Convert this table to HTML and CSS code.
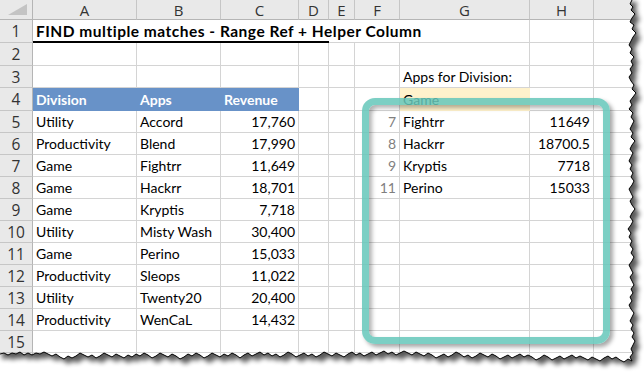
FILE: index.html
```html
<!DOCTYPE html>
<html>
<head>
<meta charset="utf-8">
<link rel="stylesheet" href="styles.css">
</head>
<body>
<div class="page">
  <div class="sheet">
    <!-- column headers -->
    <div class="hd corner"><span class="tri"></span></div>
    <div class="hd col">A</div><div class="hd col">B</div><div class="hd col">C</div><div class="hd col">D</div><div class="hd col">E</div><div class="hd col">F</div><div class="hd col">G</div><div class="hd col">H</div><div class="hd col"></div>

    <!-- row 1 -->
    <div class="hd rn">1</div>
    <div class="c title">FIND multiple matches - Range Ref + Helper Column</div>
    <div class="c nr"></div><div class="c nr"></div><div class="c"></div><div class="c"></div><div class="c"></div>

    <!-- row 2 -->
    <div class="hd rn">2</div>
    <div class="c"></div><div class="c"></div><div class="c"></div><div class="c"></div><div class="c"></div><div class="c"></div><div class="c"></div><div class="c"></div><div class="c"></div>

    <!-- row 3 -->
    <div class="hd rn">3</div>
    <div class="c"></div><div class="c"></div><div class="c"></div><div class="c"></div><div class="c"></div><div class="c"></div><div class="c">Apps for Division:</div><div class="c"></div><div class="c"></div>

    <!-- row 4 -->
    <div class="hd rn">4</div>
    <div class="c blue">Division</div><div class="c blue">Apps</div><div class="c blue">Revenue</div><div class="c"></div><div class="c"></div><div class="c"></div><div class="c cream">Game</div><div class="c"></div><div class="c"></div>

    <!-- row 5 -->
    <div class="hd rn">5</div>
    <div class="c">Utility</div><div class="c">Accord</div><div class="c num">17,760</div><div class="c"></div><div class="c"></div><div class="c num gray">7</div><div class="c">Fightrr</div><div class="c num">11649</div><div class="c"></div>

    <!-- row 6 -->
    <div class="hd rn">6</div>
    <div class="c">Productivity</div><div class="c">Blend</div><div class="c num">17,990</div><div class="c"></div><div class="c"></div><div class="c num gray">8</div><div class="c">Hackrr</div><div class="c num">18700.5</div><div class="c"></div>

    <!-- row 7 -->
    <div class="hd rn">7</div>
    <div class="c">Game</div><div class="c">Fightrr</div><div class="c num">11,649</div><div class="c"></div><div class="c"></div><div class="c num gray">9</div><div class="c">Kryptis</div><div class="c num">7718</div><div class="c"></div>

    <!-- row 8 -->
    <div class="hd rn">8</div>
    <div class="c">Game</div><div class="c">Hackrr</div><div class="c num">18,701</div><div class="c"></div><div class="c"></div><div class="c num gray">11</div><div class="c">Perino</div><div class="c num">15033</div><div class="c"></div>

    <!-- row 9 -->
    <div class="hd rn">9</div>
    <div class="c">Game</div><div class="c">Kryptis</div><div class="c num">7,718</div><div class="c"></div><div class="c"></div><div class="c"></div><div class="c"></div><div class="c"></div><div class="c"></div>

    <!-- row 10 -->
    <div class="hd rn">10</div>
    <div class="c">Utility</div><div class="c">Misty Wash</div><div class="c num">30,400</div><div class="c"></div><div class="c"></div><div class="c"></div><div class="c"></div><div class="c"></div><div class="c"></div>

    <!-- row 11 -->
    <div class="hd rn">11</div>
    <div class="c">Game</div><div class="c">Perino</div><div class="c num">15,033</div><div class="c"></div><div class="c"></div><div class="c"></div><div class="c"></div><div class="c"></div><div class="c"></div>

    <!-- row 12 -->
    <div class="hd rn">12</div>
    <div class="c">Productivity</div><div class="c">Sleops</div><div class="c num">11,022</div><div class="c"></div><div class="c"></div><div class="c"></div><div class="c"></div><div class="c"></div><div class="c"></div>

    <!-- row 13 -->
    <div class="hd rn">13</div>
    <div class="c">Utility</div><div class="c">Twenty20</div><div class="c num">20,400</div><div class="c"></div><div class="c"></div><div class="c"></div><div class="c"></div><div class="c"></div><div class="c"></div>

    <!-- row 14 -->
    <div class="hd rn">14</div>
    <div class="c">Productivity</div><div class="c">WenCaL</div><div class="c num">14,432</div><div class="c"></div><div class="c"></div><div class="c"></div><div class="c"></div><div class="c"></div><div class="c"></div>

    <!-- row 15 -->
    <div class="hd rn">15</div>
    <div class="c"></div><div class="c"></div><div class="c"></div><div class="c"></div><div class="c"></div><div class="c"></div><div class="c"></div><div class="c"></div><div class="c"></div>

    <!-- row 16 -->
    <div class="hd rn">16</div>
    <div class="c"></div><div class="c"></div><div class="c"></div><div class="c"></div><div class="c"></div><div class="c"></div><div class="c"></div><div class="c"></div><div class="c"></div>
  </div>

  <div class="callout"></div>

  <svg class="torn" width="644" height="373" viewBox="0 0 644 373">
    <defs>
      <path id="sheetShape" d="M-3,-3 L632,-3 L632,0 L630,4 L633,7 L631,10 L635,14 L632,18 L630,22 L634,25 L632,29 L636,33 L633,37 L631,41 L629,45 L632,49 L630,53 L634,57 L631,61 L633,65 L630,69 L632,73 L629,77 L631,81 L634,85 L632,89 L636,93 L633,97 L630,101 L632,105 L629,109 L633,113 L631,117 L634,121 L632,125 L630,129 L633,133 L631,137 L635,141 L632,145 L630,149 L633,153 L631,157 L629,161 L632,165 L630,169 L633,173 L631,177 L634,181 L632,185 L629,189 L631,193 L633,197 L630,201 L632,205 L635,209 L632,213 L630,217 L633,221 L631,225 L628,229 L631,233 L629,237 L632,241 L630,245 L633,249 L631,253 L634,257 L632,261 L629,265 L631,269 L633,273 L630,277 L632,281 L634,285 L631,289 L633,293 L630,297 L632,301 L629,305 L631,309 L634,313 L632,317 L630,321 L633,325 L631,329 L634,333 L632,337 L635,341 L633,345 L631,349 L633,353 L630,357 L632,361 L628,359 L624,362 L620,360 L616,357 L612,359 L608,356 L604,358 L600,361 L596,359 L592,357 L588,360 L584,358 L580,356 L576,358 L572,355 L568,357 L564,359 L560,356 L556,358 L552,360 L548,357 L544,355 L540,358 L536,360 L532,357 L528,355 L524,357 L520,354 L516,356 L512,358 L508,355 L504,357 L500,359 L496,356 L492,354 L488,357 L484,355 L480,353 L476,356 L472,358 L468,355 L464,357 L460,354 L456,352 L452,355 L448,357 L444,354 L440,356 L436,358 L432,355 L428,353 L424,356 L420,354 L416,352 L412,355 L408,353 L404,351 L400,353 L396,355 L392,352 L388,354 L384,351 L380,353 L376,355 L372,352 L368,354 L364,356 L360,353 L356,355 L352,352 L348,354 L344,357 L340,355 L336,353 L332,356 L328,354 L324,352 L320,355 L316,357 L312,354 L308,356 L304,353 L300,355 L296,357 L292,354 L288,352 L284,355 L280,357 L276,354 L272,356 L268,353 L264,355 L260,352 L256,354 L252,356 L248,353 L244,355 L240,358 L236,355 L232,353 L228,356 L224,354 L220,357 L216,355 L212,353 L208,356 L204,358 L200,355 L196,353 L192,356 L188,354 L184,357 L180,359 L176,356 L172,354 L168,357 L164,355 L160,353 L156,356 L152,358 L148,355 L144,353 L140,356 L136,354 L132,357 L128,355 L124,358 L120,356 L116,354 L112,357 L108,355 L104,353 L100,356 L96,358 L92,355 L88,357 L84,355 L80,353 L76,356 L72,358 L68,356 L64,359 L60,357 L56,354 L52,356 L48,354 L44,352 L40,354 L36,353 L32,355 L28,353 L24,355 L20,352 L16,354 L12,353 L8,355 L4,353 L0,354 L-3,354 Z"/>
      <mask id="outside">
        <rect x="0" y="0" width="644" height="373" fill="#fff"/>
        <use href="#sheetShape" fill="#000"/>
      </mask>
      <filter id="soft" x="-10%" y="-10%" width="120%" height="120%">
        <feGaussianBlur stdDeviation="2.5"/>
      </filter>
    </defs>
    <g mask="url(#outside)">
      <rect x="0" y="0" width="644" height="373" fill="#fff"/>
      <use href="#sheetShape" transform="translate(5,5)" fill="#000" opacity="0.65" filter="url(#soft)"/>
    </g>
    <use href="#sheetShape" fill="none" stroke="#000" stroke-width="1"/>
  </svg>
</div>
</body>
</html>
```

FILE: styles.css
```css
* { box-sizing: border-box; }

html, body {
  margin: 0;
  padding: 0;
  background: #fff;
}

.page {
  position: relative;
  width: 644px;
  height: 373px;
  overflow: hidden;
}

.sheet {
  display: grid;
  grid-template-columns: 33px 104px 84px 78px 30px 26px 45px 130px 64px 50px;
  grid-template-rows: 20px 23px 23px 22px 23px repeat(12, 22px);
  font-family: Lato, "Open Sans", sans-serif;
  font-size: 14px;
  color: #000;
}

.hd {
  background: #e9e9e9;
  border-right: 1px solid #c6c6c6;
  border-bottom: 1px solid #c6c6c6;
  font-family: "Open Sans", sans-serif;
  color: #333;
  display: flex;
  align-items: center;
  justify-content: center;
}

.col {
  font-size: 15px;
  border-bottom-color: #b5b5b5;
}

.rn {
  font-size: 15.5px;
  border-right-color: #b5b5b5;
}

.corner {
  position: relative;
  border-right-color: #b5b5b5;
  border-bottom-color: #b5b5b5;
}

.tri {
  position: absolute;
  right: 5px;
  bottom: 4px;
  width: 0;
  height: 0;
  border-left: 19px solid transparent;
  border-bottom: 11px solid #c4c4c4;
}

.c {
  border-right: 1px solid #d4d4d4;
  border-bottom: 1px solid #d4d4d4;
  padding: 1px 3px 0 3px;
  line-height: 20px;
  white-space: nowrap;
  display: flex;
  align-items: flex-end;
}

.nr { border-right: none; }

.title {
  grid-column: span 4;
  font-weight: bold;
  font-size: 15.5px;
  letter-spacing: 0.5px;
  border-right: none;
  border-bottom: 2px solid #000;
  overflow: visible;
}

.num { justify-content: flex-end; }

.gray { color: #7f7f7f; }

.blue {
  background: #6892c8;
  color: #fff;
  font-weight: bold;
  border-right-color: #6892c8;
  border-bottom-color: #6892c8;
}

.cream {
  background: #fff2cc;
  border-right-color: #fff2cc;
  border-bottom-color: #fff2cc;
}

.callout {
  position: absolute;
  left: 362px;
  top: 98px;
  width: 248px;
  height: 246px;
  border: 7px solid rgba(101, 199, 186, 0.85);
  border-radius: 13px;
  box-shadow: 3px 3px 4px rgba(0, 0, 0, 0.35), inset 3px 3px 4px rgba(0, 0, 0, 0.3);
}

.torn {
  position: absolute;
  left: 0;
  top: 0;
}
```
